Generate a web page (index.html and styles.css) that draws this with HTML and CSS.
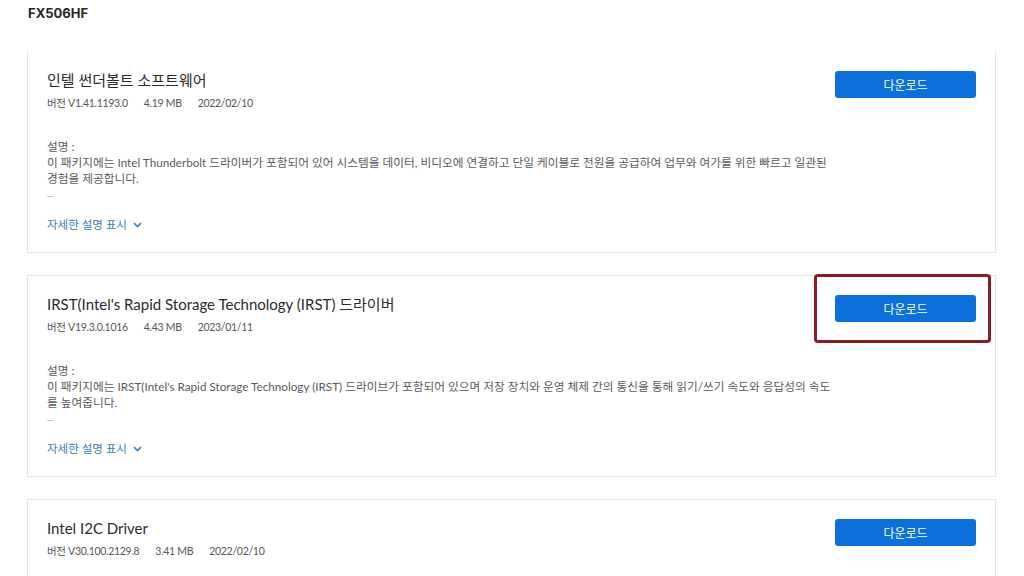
FILE: index.html
```html
<!DOCTYPE html>
<html lang="ko">
<head>
<meta charset="utf-8">
<title>FX506HF</title>
<link rel="stylesheet" href="styles.css">
</head>
<body>
<div class="page">
  <h1 class="model">FX506HF</h1>
  <div class="list">
    <section class="card card-first">
      <div class="info">
        <h2 class="title">인텔 썬더볼트 소프트웨어</h2>
        <div class="meta"><span>버전 V1.41.1193.0</span><span>4.19 MB</span><span>2022/02/10</span></div>
        <div class="desc">
          <div>설명 :</div>
          <div>이 패키지에는 Intel Thunderbolt 드라이버가 포함되어 있어 시스템을 데이터, 비디오에 연결하고 단일 케이블로 전원을 공급하여 업무와 여가를 위한 빠르고 일관된<br>경험을 제공합니다.</div>
          <div class="dots">...</div>
        </div>
        <a class="more">자세한 설명 표시 <svg class="chev" width="9" height="6" viewBox="0 0 9 6"><path d="M1 1 L4.5 4.5 L8 1" fill="none" stroke="currentColor" stroke-width="1.6"/></svg></a>
      </div>
      <button class="dl">다운로드</button>
    </section>

    <section class="card">
      <div class="info">
        <h2 class="title">IRST(Intel's Rapid Storage Technology (IRST) 드라이버</h2>
        <div class="meta"><span>버전 V19.3.0.1016</span><span>4.43 MB</span><span>2023/01/11</span></div>
        <div class="desc">
          <div>설명 :</div>
          <div>이 패키지에는 IRST(Intel's Rapid Storage Technology (IRST) 드라이브가 포함되어 있으며 저장 장치와 운영 체제 간의 통신을 통해 읽기/쓰기 속도와 응답성의 속도<br>를 높여줍니다.</div>
          <div class="dots">...</div>
        </div>
        <a class="more">자세한 설명 표시 <svg class="chev" width="9" height="6" viewBox="0 0 9 6"><path d="M1 1 L4.5 4.5 L8 1" fill="none" stroke="currentColor" stroke-width="1.6"/></svg></a>
      </div>
      <button class="dl">다운로드</button>
      <div class="highlight"></div>
    </section>

    <section class="card">
      <div class="info">
        <h2 class="title">Intel I2C Driver</h2>
        <div class="meta"><span>버전 V30.100.2129.8</span><span>3.41 MB</span><span>2022/02/10</span></div>
      </div>
      <button class="dl">다운로드</button>
    </section>
  </div>
</div>
</body>
</html>
```

FILE: styles.css
```css
html, body {
  margin: 0;
  padding: 0;
  background: #ffffff;
}
body {
  font-family: "Lato", "Noto Sans CJK KR", sans-serif;
  color: #2b2b2b;
  overflow: hidden;
}
.page {
  padding: 5px 28px 0 27px;
  width: 969px;
}
.model {
  margin: 0 0 30px 1px;
  font-family: "Inter", sans-serif;
  font-size: 13px;
  line-height: 16px;
  font-weight: 700;
  color: #262626;
}
.list {
  display: flex;
  flex-direction: column;
  gap: 22px;
}
.card {
  position: relative;
  display: flex;
  justify-content: space-between;
  align-items: flex-start;
  border: 1px solid #e3e3e3;
  padding: 18px 18px 19px 19px;
  height: 163px;
}
.card-first {
  border-top-color: transparent;
}
.info {
  display: flex;
  flex-direction: column;
  align-items: flex-start;
}
.title {
  margin: 0;
  font-size: 15px;
  line-height: 20px;
  font-weight: 400;
  color: #2b2b2b;
}
.meta {
  margin-top: 5px;
  display: flex;
  gap: 16px;
  font-size: 10.5px;
  letter-spacing: -0.3px;
  line-height: 16px;
  color: #555555;
}
.desc {
  margin-top: 27px;
  font-size: 11.7px;
  line-height: 16px;
  color: #5a5a5a;
}
.dots {
  font-size: 9px;
  color: #888;
}
.more {
  margin-top: 15px;
  display: flex;
  align-items: center;
  gap: 6px;
  font-size: 11.5px;
  line-height: 16px;
  color: #3b7cbd;
  cursor: pointer;
}
.chev {
  color: #3b7cbd;
}
.dl {
  margin-top: 1px;
  margin-right: 1px;
  width: 141px;
  height: 27px;
  border: none;
  border-radius: 3px;
  background: #0b6fdc;
  color: #ffffff;
  font-family: "Noto Sans CJK KR", sans-serif;
  font-size: 12px;
  cursor: pointer;
}
.highlight {
  position: absolute;
  left: 786px;
  top: -2px;
  width: 171px;
  height: 63px;
  border: 3px solid #8b1c24;
  border-radius: 4px;
  pointer-events: none;
}
```
